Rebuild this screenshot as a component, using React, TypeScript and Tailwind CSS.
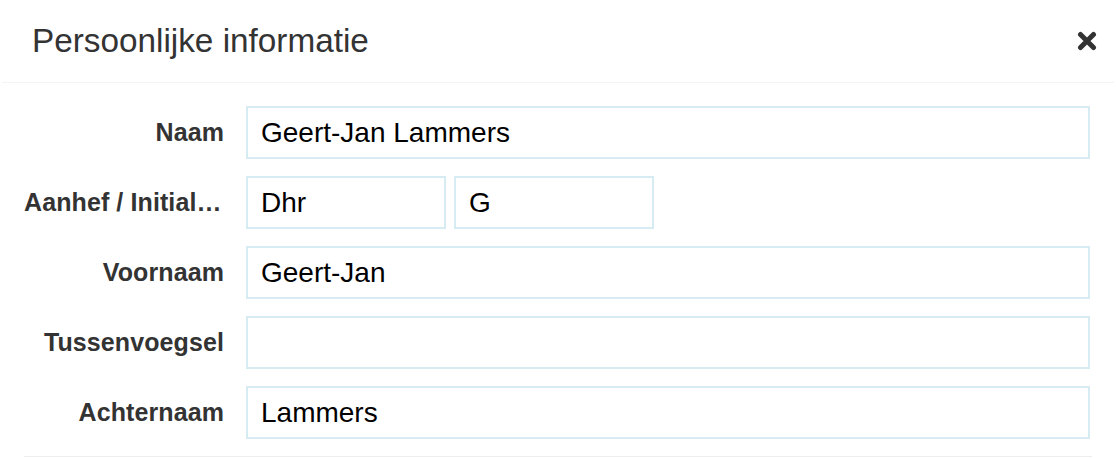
const rows: { label: string; values: string[] }[] = [
  { label: "Naam", values: ["Geert-Jan Lammers"] },
  { label: "Aanhef / Initialen", values: ["Dhr", "G"] },
  { label: "Voornaam", values: ["Geert-Jan"] },
  { label: "Tussenvoegsel", values: [""] },
  { label: "Achternaam", values: ["Lammers"] },
];

function CloseIcon() {
  return (
    <svg width="20" height="20" viewBox="0 0 20 20" className="text-[#333]">
      <path
        d="M3.5 3.5 L16.5 16.5 M16.5 3.5 L3.5 16.5"
        stroke="currentColor"
        strokeWidth="5"
        strokeLinecap="round"
      />
    </svg>
  );
}

function Field({ value, small }: { value: string; small?: boolean }) {
  return (
    <input
      readOnly
      value={value}
      className={`h-[53px] border-2 border-[#d6ebf2] bg-white px-[13px] text-[28px] text-black outline-none ${
        small ? "w-[200px]" : "flex-1 min-w-0"
      }`}
      style={{ fontFamily: "inherit" }}
    />
  );
}

export default function App() {
  return (
    <div
      className="w-[1116px] h-[458px] bg-white overflow-hidden"
      style={{ fontFamily: '"Liberation Sans", Arial, sans-serif' }}
    >
      <div className="mx-[2px] h-[83px] flex items-center justify-between pl-[30px] pr-[17px] border-b border-[#f1f5f8]">
        <div className="text-[33.3px] text-[#333] leading-none">Persoonlijke informatie</div>
        <CloseIcon />
      </div>

      <div className="mx-6 pt-[23px] pb-[17px] flex flex-col gap-[17px] border-b border-[#eeeeee] pr-[2px]">
        {rows.map((row) => (
          <div key={row.label} className="flex items-center gap-[22px]">
            <div className="w-[200px] shrink-0 text-right font-bold text-[25px] tracking-[0.1px] text-[#333] truncate">
              {row.label}
            </div>
            {row.values.length > 1 ? (
              <div className="flex gap-[8px]">
                {row.values.map((v, i) => (
                  <Field key={i} value={v} small />
                ))}
              </div>
            ) : (
              <Field value={row.values[0]} />
            )}
          </div>
        ))}
      </div>
    </div>
  );
}
